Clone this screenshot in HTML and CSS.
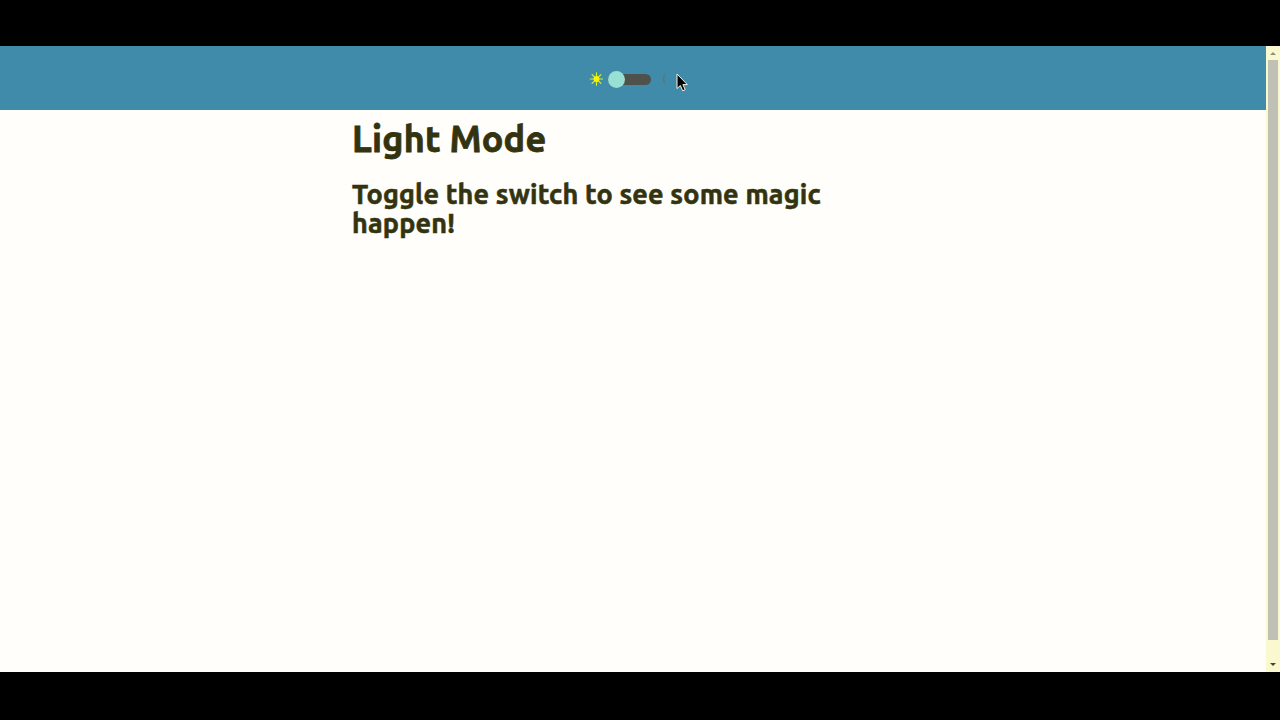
FILE: index.html
```html
<!DOCTYPE html>
<html lang="en">
<head>
<meta charset="utf-8">
<title>Light Mode</title>
<link rel="stylesheet" href="styles.css">
</head>
<body>
<div class="viewport">
  <div class="page">
    <header class="bar">
      <svg class="sun" viewBox="0 0 14 14"><path d="M7.500.8v12.400M1.300 7h12.400M3.100 2.600l8.800 8.800M11.900 2.600l-8.800 8.800" stroke="#d3ee2c" stroke-width="1.200" stroke-linecap="round"/><circle cx="7.500" cy="7" r="3" fill="#fff200"/></svg>
      <div class="switch"><span class="knob"></span></div>
      <svg class="moon" viewBox="0 0 8 14"><path d="M5.500 1C.8 4 .8 10 5.500 13C2.600 10 2.600 4 5.500 1z" fill="#58786f"/></svg>
      <svg class="cursor" viewBox="0 0 12 19"><path d="M1 1v14.500l3.400-3 2.300 5.300 2.500-1.100-2.300-5.100h4.400z" fill="#000" stroke="#fff4e0" stroke-width="1"/></svg>
    </header>
    <main class="content">
      <h1>Light Mode</h1>
      <h2>Toggle the switch to see some magic happen!</h2>
    </main>
  </div>
  <div class="scroll">
    <span class="up"></span><span class="thumb"></span><span class="down"></span>
  </div>
</div>
</body>
</html>
```
FILE: styles.css
```css
* { box-sizing: border-box; }
body { margin: 0; height: 720px; padding: 46px 0 48px; background: #000; overflow: hidden; font-family: Ubuntu, "Noto Sans", sans-serif; }
.viewport { display: flex; height: 626px; }
.page { flex: 1; background: #fffefa; }
.bar { position: relative; height: 64px; display: flex; align-items: center; padding: 2px 0 0 589px; background-color: #408aaa; }
.sun { width: 14px; height: 14px; }
.switch { position: relative; width: 43px; height: 11px; margin-left: 5px; border-radius: 6px; background: #4f514c; }
.knob { position: absolute; left: 0; top: -3px; width: 17px; height: 17px; border-radius: 50%; background: #98dfd4; }
.moon { width: 8px; height: 14px; margin-left: 10px; }
.cursor { position: absolute; left: 676px; top: 27px; width: 12px; height: 19px; }
.content { padding: 8px 0 0 352px; color: #33340f; }
h1, h2 { margin: 0; font-weight: 700; }
h1 { font-size: 36px; line-height: 42px; letter-spacing: 0.22px; -webkit-text-stroke: 0.8px #33340f; }
h2 { width: 490px; margin-top: 20px; font-size: 27px; line-height: 29px; letter-spacing: 0.17px; -webkit-text-stroke: 0.6px #33340f; }
.scroll { width: 14px; display: flex; flex-direction: column; align-items: center; background: #f9f8cf; }
.up { margin-top: 6px; border: 3px solid transparent; border-top: 0; border-bottom: 3px solid #8f8f88; }
.thumb { width: 10px; height: 580px; margin-top: 5px; background: #c1c0b4; }
.down { margin-top: 23px; border: 3px solid transparent; border-bottom: 0; border-top: 3px solid #444430; }
```
